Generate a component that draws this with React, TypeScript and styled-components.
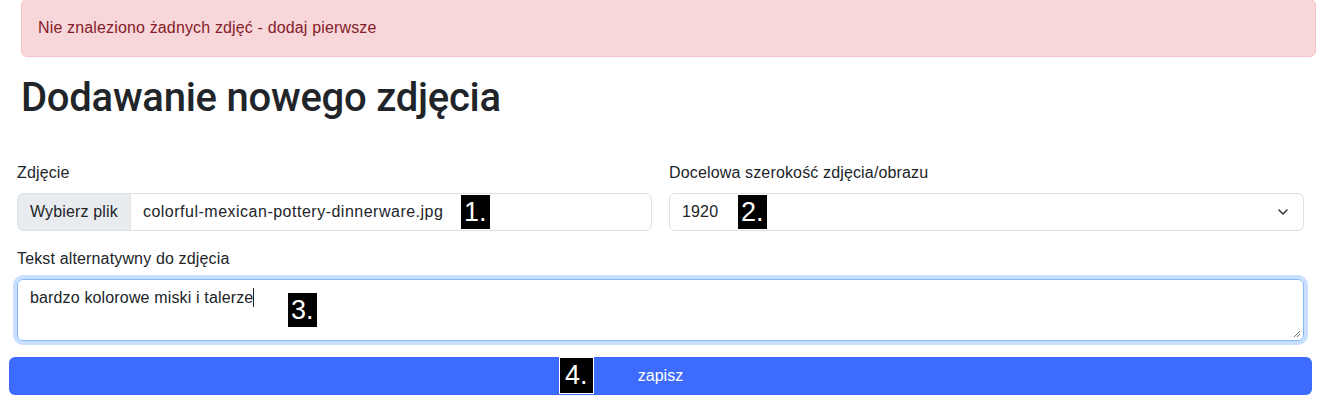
import { createGlobalStyle } from "styled-components";
import styled from "styled-components";

const GlobalStyle = createGlobalStyle`
  *, *::before, *::after {
    box-sizing: border-box;
  }

  body {
    margin: 0;
    background: #fff;
    color: #212529;
    font-family: "Liberation Sans", Arial, sans-serif;
    font-size: 16px;
    line-height: 1.5;
    letter-spacing: 0.15px;
  }
`;

const Page = styled.div`
  display: flex;
  flex-direction: column;
  padding-bottom: 6px;
`;

const Alert = styled.div`
  margin: -1px 5px 16px 21px;
  padding: 16px 16px;
  background: #f8d7da;
  border: 1px solid #f5c2c7;
  border-radius: 6px;
  color: #842029;
`;

const Title = styled.h1`
  margin: 1px 0 39px 21px;
  font-family: Roboto, "Liberation Sans", sans-serif;
  font-size: 40px;
  font-weight: 500;
  line-height: 48px;
  letter-spacing: -0.25px;
`;

const Form = styled.form`
  display: flex;
  flex-direction: column;
`;

const FieldGrid = styled.div`
  display: grid;
  grid-template-columns: 1fr 1fr;
  column-gap: 17px;
  padding: 0 17px;
  margin-bottom: 16px;
`;

const Field = styled.div<{ $wide?: boolean }>`
  display: flex;
  flex-direction: column;
  padding: ${(p) => (p.$wide ? "0 17px" : "0")};
  margin-bottom: ${(p) => (p.$wide ? "16px" : "0")};
`;

const Label = styled.label`
  display: block;
  margin-bottom: 8px;
  line-height: 24px;
`;

const Control = styled.div`
  position: relative;
  display: flex;
  align-items: center;
  height: 38px;
  border: 1px solid #dee2e6;
  border-radius: 6px;
  background: #fff;
`;

const FileButton = styled.span`
  display: flex;
  align-items: center;
  height: 100%;
  padding: 0 12px;
  background: #e9ecef;
  border-right: 1px solid #dee2e6;
  border-radius: 5px 0 0 5px;
  margin-right: 12px;
`;

const ControlText = styled.span`
  padding-left: 12px;
`;

const FileName = styled.span`
  letter-spacing: 0.5px;
`;

const Chevron = styled.svg`
  margin-left: auto;
  margin-right: 12px;
`;

const TextArea = styled.div`
  position: relative;
  height: 62px;
  padding: 6px 12px;
  border: 1px solid #86b7fe;
  border-radius: 6px;
  box-shadow: 0 0 0 4px rgba(13, 110, 253, 0.22);
`;

const Caret = styled.span`
  display: inline-block;
  width: 1px;
  height: 19px;
  background: #212529;
  vertical-align: -4px;
`;

const Grip = styled.svg`
  position: absolute;
  right: 2px;
  bottom: 2px;
`;

const SubmitButton = styled.button`
  position: relative;
  margin: 0 9px;
  height: 38px;
  border: none;
  border-radius: 6px;
  background: #3d6bfd;
  color: #fff;
  font: inherit;
  cursor: pointer;
`;

const Marker = styled.span<{ $left: number; $top: number; $framed?: boolean }>`
  position: absolute;
  left: ${(p) => p.$left}px;
  top: ${(p) => p.$top}px;
  height: ${(p) => (p.$framed ? 37 : 34)}px;
  padding: ${(p) => (p.$framed ? "0 5px" : "0 3px")};
  background: #000;
  color: #fff;
  font-family: "Liberation Sans", Arial, sans-serif;
  font-size: 27px;
  letter-spacing: 0;
  line-height: ${(p) => (p.$framed ? 35 : 34)}px;
  border: ${(p) => (p.$framed ? "1px solid #fff" : "none")};
`;

export default function App() {
  return (
    <Page>
      <GlobalStyle />
      <Alert>Nie znaleziono żadnych zdjęć - dodaj pierwsze</Alert>
      <Title>Dodawanie nowego zdjęcia</Title>

      <Form onSubmit={(e) => e.preventDefault()}>
        <FieldGrid>
          <Field>
            <Label>Zdjęcie</Label>
            <Control>
              <FileButton>Wybierz plik</FileButton>
              <FileName>colorful-mexican-pottery-dinnerware.jpg</FileName>
              <Marker $left={443} $top={1}>1.</Marker>
            </Control>
          </Field>
          <Field>
            <Label>Docelowa szerokość zdjęcia/obrazu</Label>
            <Control>
              <ControlText>1920</ControlText>
              <Marker $left={68} $top={1}>2.</Marker>
              <Chevron width="16" height="16" viewBox="0 0 16 16">
                <path
                  d="m4 6 4 4 4-4"
                  fill="none"
                  stroke="#343a40"
                  strokeWidth="1.6"
                  strokeLinecap="round"
                  strokeLinejoin="round"
                />
              </Chevron>
            </Control>
          </Field>
        </FieldGrid>

        <Field $wide>
          <Label>Tekst alternatywny do zdjęcia</Label>
          <TextArea>
            bardzo kolorowe miski i talerze
            <Caret />
            <Marker $left={270} $top={13}>3.</Marker>
            <Grip width="8" height="8" viewBox="0 0 8 8">
              <path d="M7 1 1 7M7 4 4 7" stroke="#777" strokeWidth="1" />
            </Grip>
          </TextArea>
        </Field>

        <SubmitButton type="submit">
          <Marker $left={550} $top={0} $framed>4.</Marker>
          zapisz
        </SubmitButton>
      </Form>
    </Page>
  );
}
